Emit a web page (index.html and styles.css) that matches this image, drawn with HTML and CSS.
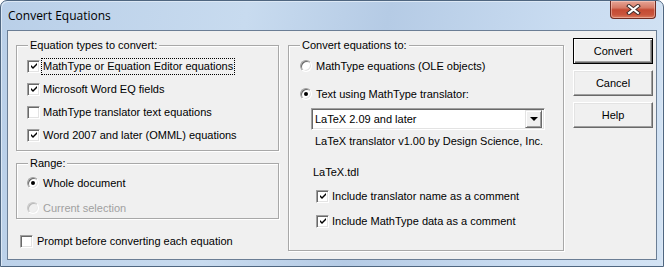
FILE: index.html
```html
<!DOCTYPE html>
<html lang="en">
<head>
    <meta charset="UTF-8">
    <meta name="viewport" content="width=device-width, initial-scale=1.0">
    <title>Convert Equations</title>
    <link rel="stylesheet" href="styles.css">
</head>
<body>
    <div class="window">
        <div class="titlebar">
            <span class="title">Convert Equations</span>
            <div class="close">
                <svg width="17" height="11" viewBox="0 0 17 11">
                    <path d="M4 2 L13 9 M13 2 L4 9" stroke="#3b2a2a" stroke-width="4" stroke-linecap="square" fill="none"/>
                    <path d="M4 2 L13 9 M13 2 L4 9" stroke="#ffffff" stroke-width="2" stroke-linecap="square" fill="none"/>
                </svg>
            </div>
        </div>

        <div class="client">
            <div class="leftcol">
                <div class="group types">
                    <span class="legend">Equation types to convert:</span>
                    <div class="row">
                        <span class="check"><svg width="7" height="7" viewBox="0 0 7 7"><polygon points="0,2 2,4 6,0 6,2 2,6 0,4" fill="#000"/></svg></span>
                        <span class="text focus">MathType or Equation Editor equations</span>
                    </div>
                    <div class="row">
                        <span class="check"><svg width="7" height="7" viewBox="0 0 7 7"><polygon points="0,2 2,4 6,0 6,2 2,6 0,4" fill="#000"/></svg></span>
                        <span class="text">Microsoft Word EQ fields</span>
                    </div>
                    <div class="row">
                        <span class="check"></span>
                        <span class="text">MathType translator text equations</span>
                    </div>
                    <div class="row">
                        <span class="check"><svg width="7" height="7" viewBox="0 0 7 7"><polygon points="0,2 2,4 6,0 6,2 2,6 0,4" fill="#000"/></svg></span>
                        <span class="text">Word 2007 and later (OMML) equations</span>
                    </div>
                </div>

                <div class="group range">
                    <span class="legend">Range:</span>
                    <div class="row">
                        <span class="radio on"></span>
                        <span class="text">Whole document</span>
                    </div>
                    <div class="row disabled">
                        <span class="radio"></span>
                        <span class="text">Current selection</span>
                    </div>
                </div>

                <div class="row prompt">
                    <span class="check"></span>
                    <span class="text">Prompt before converting each equation</span>
                </div>
            </div>

            <div class="group target">
                <span class="legend">Convert equations to:</span>
                <div class="row ole">
                    <span class="radio"></span>
                    <span class="text">MathType equations (OLE objects)</span>
                </div>
                <div class="row translator">
                    <span class="radio on"></span>
                    <span class="text">Text using MathType translator:</span>
                </div>
                <div class="combo">
                    <span class="combo-value">LaTeX 2.09 and later</span>
                    <span class="combo-arrow"></span>
                </div>
                <div class="info">LaTeX translator v1.00 by Design Science, Inc.</div>
                <div class="file">LaTeX.tdl</div>
                <div class="row sub first-sub">
                    <span class="check"><svg width="7" height="7" viewBox="0 0 7 7"><polygon points="0,2 2,4 6,0 6,2 2,6 0,4" fill="#000"/></svg></span>
                    <span class="text">Include translator name as a comment</span>
                </div>
                <div class="row sub">
                    <span class="check"><svg width="7" height="7" viewBox="0 0 7 7"><polygon points="0,2 2,4 6,0 6,2 2,6 0,4" fill="#000"/></svg></span>
                    <span class="text">Include MathType data as a comment</span>
                </div>
            </div>

            <div class="buttons">
                <div class="btn default"><span>Convert</span></div>
                <div class="btn"><span>Cancel</span></div>
                <div class="btn"><span>Help</span></div>
            </div>
        </div>
    </div>
</body>
</html>
```

FILE: styles.css
```css
* {
    box-sizing: border-box;
}

body {
    margin: 0;
    width: 664px;
    height: 267px;
    overflow: hidden;
    background-color: #ffffff;
    font-family: "Liberation Sans", Arial, sans-serif;
    font-size: 11px;
    color: #000;
}

.window {
    height: 267px;
    display: flex;
    flex-direction: column;
    padding: 0 6px 6px 6px;
    border: 1px solid #4f6680;
    border-radius: 7px 7px 0 0;
    background: linear-gradient(100deg, #b9cfe8 0%, #c8dbef 35%, #b5cbe5 55%, #c9dcf1 80%, #d3e3f4 100%);
    box-shadow: inset 1px 1px 0 #dce8f5, inset -1px 0 0 #dce8f5;
}

.titlebar {
    height: 29px;
    display: flex;
    justify-content: space-between;
    align-items: flex-start;
    padding-left: 1px;
}

.title {
    font-family: "Open Sans", "Noto Sans", sans-serif;
    font-size: 12px;
    line-height: 29px;
    color: #000;
}

.close {
    width: 46px;
    height: 18px;
    margin-right: 1px;
    display: flex;
    align-items: center;
    justify-content: center;
    border: 1px solid #6e2b22;
    border-top: none;
    border-radius: 0 0 4px 4px;
    background: linear-gradient(#e6a596 0%, #d67a66 40%, #c44a33 52%, #c9553d 80%, #d97c5f 100%);
    box-shadow: inset 0 0 0 1px rgba(255, 220, 210, 0.45);
}

.client {
    flex: 1;
    display: flex;
    padding: 0 3px 8px 8px;
    background-color: #f0f0f0;
    border: 1px solid #6b7e95;
}

.leftcol {
    width: 263px;
    display: flex;
    flex-direction: column;
}

.group {
    border: 1px solid #a8a8a8;
    box-shadow: inset 1px 1px 0 #fff, 1px 1px 0 #fff;
    margin-top: 14px;
}

.legend {
    display: block;
    width: fit-content;
    margin: -7px 0 0 1px;
    padding: 0 2px;
    line-height: 13px;
    background-color: #f0f0f0;
}

.row {
    height: 20px;
    display: flex;
    align-items: center;
    gap: 2px;
}

.types {
    display: flex;
    flex-direction: column;
    gap: 3px;
    padding: 0 0 5px 10px;
}

.types .legend {
    margin-bottom: 1px;
}

.range {
    margin-top: 12px;
    padding: 0 0 0 10px;
}

.range .row {
    margin-top: 5px;
}

.range .legend + .row {
    margin-top: 3px;
}

.prompt {
    margin-top: 12px;
    padding-left: 4px;
    gap: 3px;
}

.text {
    line-height: 15px;
    padding: 0 1px;
}

.text.focus {
    outline: 1px dotted #000;
}

.disabled .text {
    color: #a0a0a0;
}

.check {
    width: 13px;
    height: 13px;
    flex-shrink: 0;
    display: flex;
    align-items: center;
    justify-content: center;
    background-color: #fff;
    border: 1px solid;
    border-color: #a0a0a0 #fff #fff #a0a0a0;
    box-shadow: inset 1px 1px 0 #696969, inset -1px -1px 0 #e3e3e3;
}

.check svg {
    margin: 1px 0 0 1px;
}

.radio {
    width: 12px;
    height: 12px;
    flex-shrink: 0;
    border-radius: 50%;
    background-color: #fff;
    border: 1px solid;
    border-color: #a0a0a0 #fff #fff #a0a0a0;
    box-shadow: inset 1px 1px 0 #696969, inset -1px -1px 0 #e3e3e3;
    display: flex;
    align-items: center;
    justify-content: center;
    margin-right: 1px;
}

.radio.on::after {
    content: "";
    width: 4px;
    height: 4px;
    border-radius: 50%;
    background-color: #000;
}

.disabled .radio {
    background-color: #f0f0f0;
    border-color: #c8c8c8 #fff #fff #c8c8c8;
    box-shadow: inset 1px 1px 0 #b8b8b8, inset -1px -1px 0 #ececec;
}

.target {
    width: 276px;
    margin-left: 9px;
    padding: 0 0 0 11px;
}

.target .legend {
    margin-left: 0;
}

.ole {
    margin-top: 4px;
}

.translator {
    margin-top: 8px;
}

.combo {
    width: 234px;
    height: 22px;
    margin: 4px 0 0 11px;
    display: flex;
    align-items: center;
    justify-content: space-between;
    background-color: #fff;
    border: 1px solid;
    border-color: #a0a0a0 #fff #fff #a0a0a0;
    box-shadow: inset 1px 1px 0 #696969, inset -1px -1px 0 #e3e3e3;
    padding: 2px;
}

.combo-value {
    padding-left: 1px;
}

.combo-arrow {
    width: 17px;
    height: 18px;
    display: flex;
    align-items: center;
    justify-content: center;
    background-color: #f0f0f0;
    border: 1px solid;
    border-color: #e3e3e3 #696969 #696969 #e3e3e3;
    box-shadow: inset 1px 1px 0 #fff, inset -1px -1px 0 #a0a0a0;
}

.combo-arrow::after {
    content: "";
    border-left: 4px solid transparent;
    border-right: 4px solid transparent;
    border-top: 4px solid #000;
}

.info {
    margin: 5px 0 0 15px;
    line-height: 13px;
}

.file {
    margin: 18px 0 0 13px;
    line-height: 13px;
}

.sub {
    padding-left: 16px;
    margin-top: 5px;
}

.first-sub {
    margin-top: 7px;
}

.buttons {
    width: 80px;
    margin: 7px 0 0 9px;
    display: flex;
    flex-direction: column;
    gap: 6px;
}

.btn {
    height: 26px;
    display: flex;
    align-items: center;
    justify-content: center;
    background-color: #f0f0f0;
    border: 1px solid;
    border-color: #fff #696969 #696969 #fff;
    box-shadow: inset -1px -1px 0 #a0a0a0, inset 1px 1px 0 #e3e3e3;
}

.btn.default {
    border: 1px solid #000;
    box-shadow: inset 1px 1px 0 #fff, inset -1px -1px 0 #696969, inset -2px -2px 0 #a0a0a0;
}
```
